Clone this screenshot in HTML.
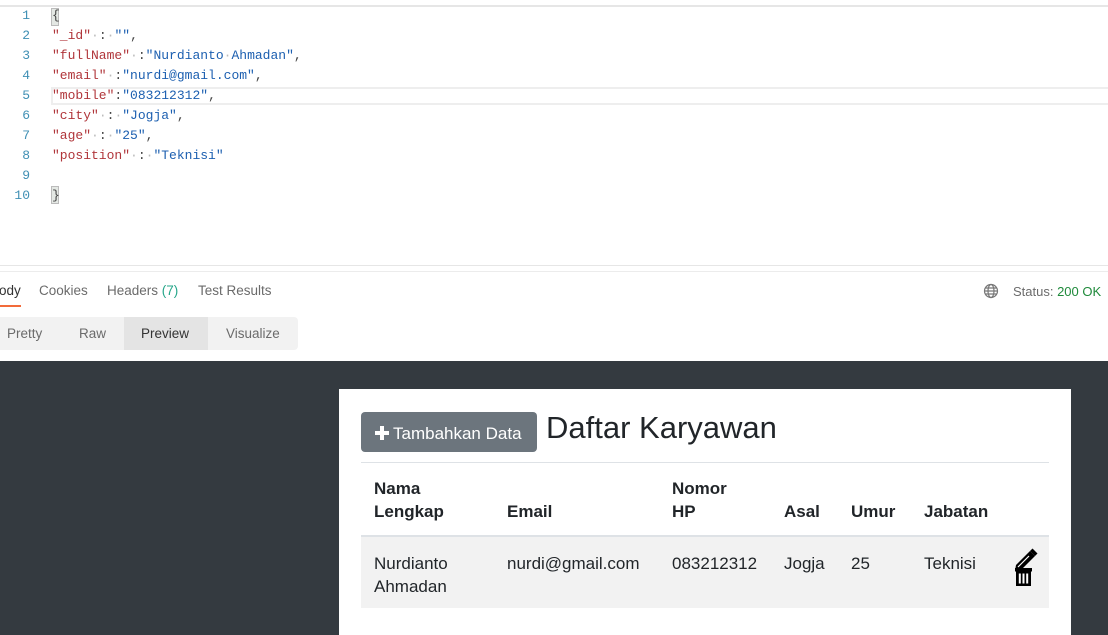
<!DOCTYPE html>
<html><head><meta charset="utf-8"><style>
*{margin:0;padding:0;box-sizing:border-box}
body{width:1108px;height:635px;overflow:hidden;background:#fff;position:relative;font-family:"Liberation Sans",sans-serif}
.a{position:absolute;white-space:nowrap}
.code{font-family:"Liberation Mono",monospace;font-size:13px;line-height:20px}
.ln{color:#3f8fb4;width:30px;text-align:right;left:0}
.k{color:#b0353a}.s{color:#1c5fb0}.p{color:#444}.d{color:#bbb}
.tb{font-size:13.5px;color:#6b6b6b}
.th{font-weight:bold;font-size:17px;line-height:23px;color:#212529}
.td{font-size:17px;line-height:23px;color:#212529}
</style></head><body>
<div class="a" style="left:0;top:5px;width:1108px;height:2px;background:#e6e6e6"></div>
<div class="a" style="left:51px;top:87px;width:1057px;height:18px;border:2px solid #eeeeee;border-right:none"></div>
<div class="a" style="left:51px;top:8px;width:8px;height:18px;background:#e4e8e4;border:1px solid #bbb"></div>
<div class="a" style="left:51px;top:186px;width:8px;height:18px;background:#e4e8e4;border:1px solid #bbb"></div>
<div class="code">
<div class="a ln" style="top:6px">1</div>
<div class="a ln" style="top:26px">2</div>
<div class="a ln" style="top:46px">3</div>
<div class="a ln" style="top:66px">4</div>
<div class="a ln" style="top:86px">5</div>
<div class="a ln" style="top:106px">6</div>
<div class="a ln" style="top:126px">7</div>
<div class="a ln" style="top:146px">8</div>
<div class="a ln" style="top:166px">9</div>
<div class="a ln" style="top:186px">10</div>
<div class="a p" style="left:52px;top:6px">{</div>
<div class="a" style="left:52px;top:26px"><span class="k">"_id"</span><span class="d">·</span><span class="p">:</span><span class="d">·</span><span class="s">""</span><span class="p">,</span></div>
<div class="a" style="left:52px;top:46px"><span class="k">"fullName"</span><span class="d">·</span><span class="p">:</span><span class="s">"Nurdianto<span class="d">·</span>Ahmadan"</span><span class="p">,</span></div>
<div class="a" style="left:52px;top:66px"><span class="k">"email"</span><span class="d">·</span><span class="p">:</span><span class="s">"nurdi@gmail.com"</span><span class="p">,</span></div>
<div class="a" style="left:52px;top:86px"><span class="k">"mobile"</span><span class="p">:</span><span class="s">"083212312"</span><span class="p">,</span></div>
<div class="a" style="left:52px;top:106px"><span class="k">"city"</span><span class="d">·</span><span class="p">:</span><span class="d">·</span><span class="s">"Jogja"</span><span class="p">,</span></div>
<div class="a" style="left:52px;top:126px"><span class="k">"age"</span><span class="d">·</span><span class="p">:</span><span class="d">·</span><span class="s">"25"</span><span class="p">,</span></div>
<div class="a" style="left:52px;top:146px"><span class="k">"position"</span><span class="d">·</span><span class="p">:</span><span class="d">·</span><span class="s">"Teknisi"</span></div>
<div class="a p" style="left:52px;top:186px">}</div>
</div>
<div class="a" style="left:0;top:265px;width:1108px;height:1px;background:#e6e6e6"></div>
<div class="a" style="left:0;top:271px;width:1108px;height:1px;background:#ececec"></div>
<div class="a tb" style="left:-10px;top:283px;color:#333">Body</div>
<div class="a" style="left:0;top:305px;width:21px;height:2px;background:#f26b3a"></div>
<div class="a tb" style="left:39px;top:283px">Cookies</div>
<div class="a tb" style="left:107px;top:283px">Headers <span style="color:#26a68a">(7)</span></div>
<div class="a tb" style="left:198px;top:283px">Test Results</div>
<svg class="a" style="left:983px;top:283px" width="16" height="16" viewBox="0 0 16 16" fill="none" stroke="#777" stroke-width="1.2"><circle cx="8" cy="8" r="6.5"/><ellipse cx="8" cy="8" rx="3" ry="6.5"/><path d="M1.5 8h13M2.5 5h11M2.5 11h11"/></svg>
<div class="a" style="left:1013px;top:284px;font-size:13px;color:#6b6b6b">Status: <span style="color:#1f8a3b">200 OK</span></div>
<div class="a" style="left:-10px;top:317px;width:308px;height:33px;background:#f2f2f2;border-radius:4px"></div>
<div class="a" style="left:124px;top:317px;width:84px;height:33px;background:#e4e4e4"></div>
<div class="a tb" style="left:7px;top:326px">Pretty</div>
<div class="a tb" style="left:79px;top:326px">Raw</div>
<div class="a tb" style="left:141px;top:326px;color:#333">Preview</div>
<div class="a tb" style="left:226px;top:326px">Visualize</div>
<div class="a" style="left:0;top:361px;width:1108px;height:274px;background:#343a40"></div>
<div class="a" style="left:339px;top:389px;width:732px;height:246px;background:#fff"></div>
<div class="a" style="left:361px;top:412px;width:176px;height:40px;background:#6c757d;border-radius:4px"></div>
<div class="a" style="left:375px;top:431px;width:14px;height:4px;background:#fff"></div>
<div class="a" style="left:380px;top:426px;width:4px;height:14px;background:#fff"></div>
<div class="a" style="left:393px;top:424px;font-size:17px;color:#fff">Tambahkan Data</div>
<div class="a" style="left:546px;top:410px;font-size:31px;color:#212529">Daftar Karyawan</div>
<div class="a" style="left:361px;top:462px;width:688px;height:1px;background:#dee2e6"></div>
<div class="a th" style="left:374px;top:477px">Nama<br>Lengkap</div>
<div class="a th" style="left:507px;top:500px">Email</div>
<div class="a th" style="left:672px;top:477px">Nomor<br>HP</div>
<div class="a th" style="left:784px;top:500px">Asal</div>
<div class="a th" style="left:851px;top:500px">Umur</div>
<div class="a th" style="left:924px;top:500px">Jabatan</div>
<div class="a" style="left:361px;top:535px;width:688px;height:73px;background:#f2f2f2;border-top:2px solid #dee2e6"></div>
<div class="a td" style="left:374px;top:552px">Nurdianto<br>Ahmadan</div>
<div class="a td" style="left:507px;top:552px">nurdi@gmail.com</div>
<div class="a td" style="left:672px;top:552px">083212312</div>
<div class="a td" style="left:784px;top:552px">Jogja</div>
<div class="a td" style="left:851px;top:552px">25</div>
<div class="a td" style="left:924px;top:552px">Teknisi</div>
<svg class="a" style="left:1012px;top:546px" width="26" height="42" viewBox="0 0 26 42">
<path d="M4 19 L18 5 L23 10 L9 24 L3 25 Z" fill="#000"/>
<path d="M18 5 L20.5 2.5 L25.5 7.5 L23 10 Z" fill="#000"/>
<path d="M6 21 L17 10" stroke="#fff" stroke-width="1.2"/>
<rect x="3" y="22" width="17" height="3.5" fill="#000"/>
<rect x="4" y="25" width="15" height="15" fill="#000"/>
<rect x="6.8" y="27.5" width="2" height="10" fill="#fff"/>
<rect x="10.5" y="27.5" width="2" height="10" fill="#fff"/>
<rect x="14.2" y="27.5" width="2" height="10" fill="#fff"/>
</svg>
</body></html>
